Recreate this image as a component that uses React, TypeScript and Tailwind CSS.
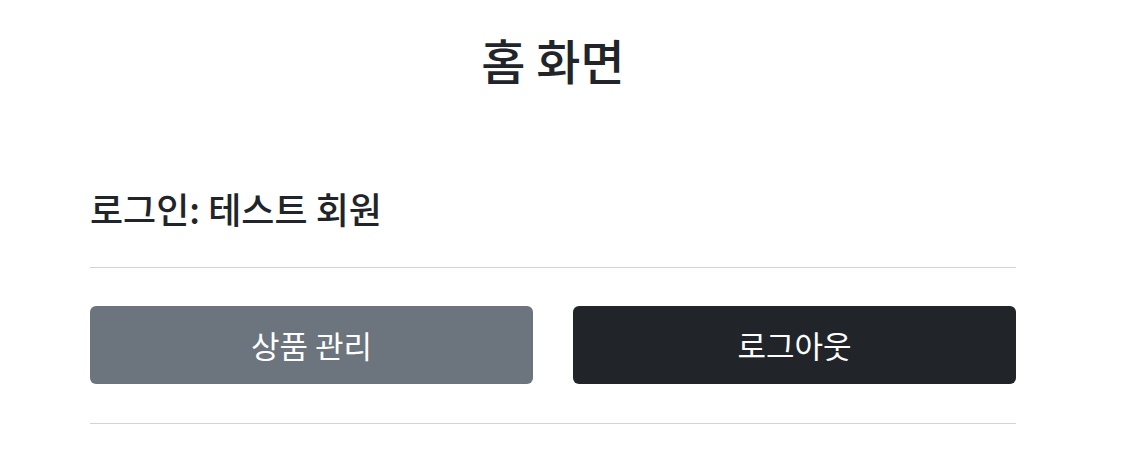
export default function App() {
  return (
    <div
      className="min-h-screen bg-white text-[#212529]"
      style={{ fontFamily: '"Noto Sans CJK KR", "Noto Sans", sans-serif' }}
    >
      <div className="ml-[90px] w-[926px] pt-[31px]">
        <h1 className="text-center text-[48px] font-medium leading-[1.2]">홈 화면</h1>

        <h2 className="mt-[98px] text-[36px] font-medium leading-[1.2]">로그인: 테스트 회원</h2>

        <hr className="mt-[37px] border-t border-[#d3d3d3]" />

        <div className="mt-[38px] flex gap-[40px]">
          <button className="h-[78px] flex-1 rounded-[6px] bg-[#6c757d] text-[31px] text-white">
            상품 관리
          </button>
          <button className="h-[78px] flex-1 rounded-[6px] bg-[#212529] text-[31px] text-white">
            로그아웃
          </button>
        </div>

        <hr className="mt-[39px] border-t border-[#d3d3d3]" />
      </div>
    </div>
  )
}
